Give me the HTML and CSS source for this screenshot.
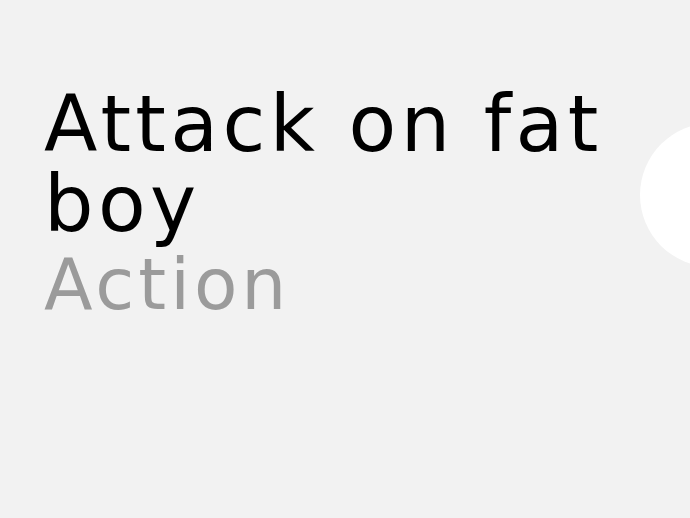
FILE: index.html
```html
<!DOCTYPE html>
<html lang="en">
<head>
    <meta charset="UTF-8">
    <meta name="viewport" content="width=device-width, initial-scale=1.0">
    <title>Attack on fat boy</title>
    <link rel="stylesheet" href="styles.css">
</head>
<body>
    <div class="card">
        <div class="card-text">
            <h1 class="card-title">Attack on fat boy</h1>
            <p class="card-type">Action</p>
        </div>
        <div class="card-button"></div>
    </div>
</body>
</html>
```

FILE: styles.css
```css
html, body {
    margin: 0;
    padding: 0;
    height: 100%;
    overflow: hidden;
}

body {
    font-family: 'DejaVu Sans', 'Liberation Sans', sans-serif;
    background-color: #f2f2f2;
    color: #000;
}

.card {
    display: flex;
    align-items: flex-start;
    padding: 84px 0 0 44px;
}

.card-text {
    flex: 1;
    min-width: 0;
}

.card-title {
    margin: 0;
    font-size: 78px;
    line-height: 80px;
    font-weight: 400;
    letter-spacing: 4.4px;
}

.card-type {
    margin: 6px 0 0;
    font-size: 71px;
    line-height: 70px;
    letter-spacing: 4px;
    color: #9b9b9b;
}

.card-button {
    flex: none;
    width: 144px;
    height: 144px;
    margin: 39px -94px 0 0;
    border-radius: 50%;
    background-color: #fff;
}
```
